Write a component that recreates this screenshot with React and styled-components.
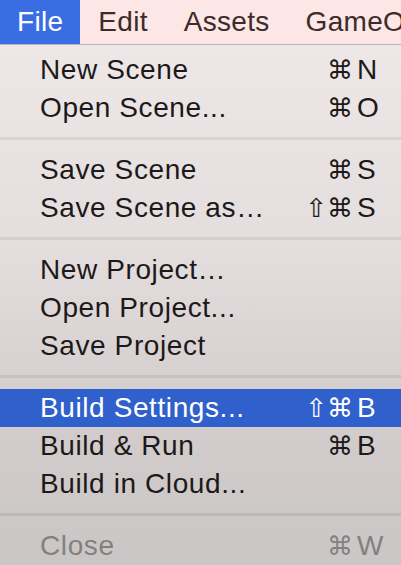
import React from "react";
import styled, { createGlobalStyle } from "styled-components";

const Global = createGlobalStyle`
  html, body { margin: 0; padding: 0; }
  body {
    width: 401px;
    height: 565px;
    overflow: hidden;
    font-family: "Liberation Sans", Arial, sans-serif;
    background: #cbc6c6;
  }
`;

const Screen = styled.div`
  width: 401px;
  height: 565px;
  display: flex;
  flex-direction: column;
  overflow: hidden;
`;

const MenuBar = styled.div`
  height: 44px;
  flex: none;
  display: flex;
  align-items: stretch;
  background: #fce6e6;
  border-bottom: 1px solid #bdb4b4;
  white-space: nowrap;
  overflow: hidden;
`;

const BarItem = styled.div`
  flex: none;
  padding: 0 ${(p) => (p.$first ? 17 : 18)}px;
  line-height: 44px;
  font-size: 28px;
  letter-spacing: 0.3px;
  color: ${(p) => (p.$active ? "#ffffff" : "#3d2b2b")};
  background: ${(p) => (p.$active ? "#3a6de2" : "transparent")};
`;

const Menu = styled.div`
  flex: 1;
  padding-top: 6px;
  background: linear-gradient(#eee7e7 0%, #e4dddd 40%, #d3cdcd 70%, #cbc6c6 100%);
`;

const Row = styled.div`
  height: 38px;
  display: flex;
  align-items: center;
  padding-left: 40px;
  font-size: 28px;
  line-height: 38px;
  letter-spacing: 0.6px;
  color: ${(p) => (p.$disabled ? "#858080" : p.$active ? "#ffffff" : "#1d1919")};
  background: ${(p) => (p.$active ? "#3060cb" : "transparent")};
  white-space: nowrap;
`;

const Label = styled.span`
  flex: 1;
`;

const Shortcut = styled.span`
  display: flex;
  align-items: center;
`;

const Mods = styled.span`
  width: 80px;
  text-align: right;
  font-family: "DejaVu Sans", sans-serif;
  font-size: 26px;
  letter-spacing: 0;
  padding-right: 4px;
`;

const Key = styled.span`
  width: 44px;
  text-align: left;
  letter-spacing: 0;
`;

const Separator = styled.div`
  height: 24px;
  display: flex;
  align-items: center;
  &::before {
    content: "";
    flex: 1;
    height: 3px;
    margin-top: -1px;
    background: rgba(60, 30, 30, 0.09);
  }
`;

const sections = [
  [
    { label: "New Scene", mods: "⌘", key: "N" },
    { label: "Open Scene...", mods: "⌘", key: "O" },
  ],
  [
    { label: "Save Scene", mods: "⌘", key: "S" },
    { label: "Save Scene as…", mods: "⇧⌘", key: "S" },
  ],
  [
    { label: "New Project…" },
    { label: "Open Project..." },
    { label: "Save Project" },
  ],
  [
    { label: "Build Settings...", mods: "⇧⌘", key: "B", active: true },
    { label: "Build & Run", mods: "⌘", key: "B" },
    { label: "Build in Cloud..." },
  ],
  [{ label: "Close", mods: "⌘", key: "W", disabled: true }],
];

export default function App() {
  return (
    <Screen>
      <Global />
      <MenuBar>
        <BarItem $first $active>File</BarItem>
        <BarItem>Edit</BarItem>
        <BarItem>Assets</BarItem>
        <BarItem>GameObject</BarItem>
      </MenuBar>
      <Menu>
        {sections.map((sec, i) => (
          <React.Fragment key={i}>
            {i > 0 && <Separator />}
            {sec.map((it) => (
              <Row key={it.label} $active={it.active} $disabled={it.disabled}>
                <Label>{it.label}</Label>
                {it.key && (
                  <Shortcut>
                    <Mods>{it.mods}</Mods>
                    <Key>{it.key}</Key>
                  </Shortcut>
                )}
              </Row>
            ))}
          </React.Fragment>
        ))}
      </Menu>
    </Screen>
  );
}
